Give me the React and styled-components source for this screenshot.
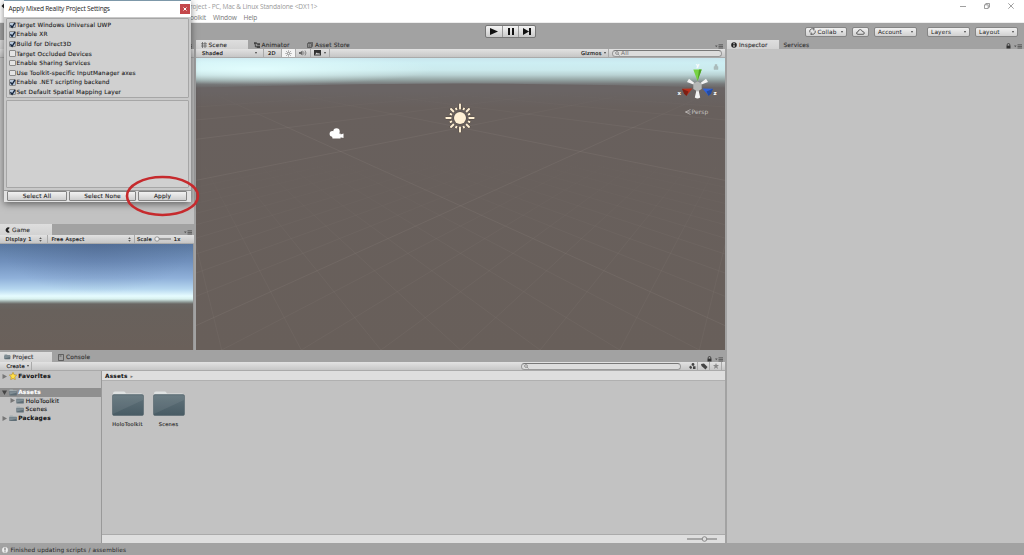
import React from 'react';
import styled, { createGlobalStyle, css } from 'styled-components';

const GlobalStyle = createGlobalStyle`
    * {
        box-sizing: border-box;
    }
    body {
        margin: 0;
        overflow: hidden;
        background: #a2a2a2;
        font-family: "DejaVu Sans", sans-serif;
        font-size: 5.8px;
        line-height: 8px;
        color: #222;
    }
    svg {
        display: block;
        flex: none;
    }
`;

const Editor = styled.div`
    position: relative;
    width: 1024px;
    height: 555px;
    display: flex;
    flex-direction: column;
    background: #a2a2a2;
    overflow: hidden;
    white-space: nowrap;
`;

const Text = styled.span`
    flex: none;
    margin-left: ${(p) => p.$ml || 0}px;
    letter-spacing: ${(p) => p.$ls ?? 0.17}px;
    font-weight: ${(p) => (p.$bold ? 'bold' : 'normal')};
    font-size: ${(p) => p.$size || 5.8}px;
    color: ${(p) => p.$color || 'inherit'};
`;

const Spacer = styled.div`
    flex: 1;
`;

const WindowHeader = styled.header`
    flex: none;
    display: flex;
    justify-content: space-between;
    height: 23px;
    background: #fff;
    border-bottom: 1px solid #eee;
    font-family: "Open Sans", sans-serif;
    color: #999;
`;

const HeaderLines = styled.div`
    padding-left: 168px;
`;

const AppMark = styled.div`
    display: flex;
    align-items: center;
    height: 12px;
    width: 22px;
`;

const TitleLine = styled.div`
    height: 12px;
    line-height: 13px;
    font-size: 6.6px;
    letter-spacing: -0.16px;
`;

const MenuLine = styled.div`
    display: flex;
    gap: 7px;
    height: 10px;
    line-height: 11px;
    font-size: 6.6px;
    letter-spacing: -0.2px;
    color: #777;
`;

const WindowButtons = styled.div`
    display: flex;
    align-items: center;
    gap: 18px;
    height: 11px;
    padding-right: 10px;
`;

const MainToolbar = styled.div`
    flex: none;
    display: flex;
    height: 17px;
    padding: 2px 6px 0 0;
`;

const PlayControls = styled.div`
    display: flex;
    width: 51px;
    height: 13px;
    margin-left: 485px;
    border: 1px solid #777;
    border-radius: 2px;
    background: linear-gradient(#f4f4f4, #c9c9c9);
`;

const PlayButton = styled.div`
    flex: 1;
    display: flex;
    align-items: center;
    justify-content: center;
    & + & {
        border-left: 1px solid #999;
    }
`;

const ToolbarButton = styled.div`
    display: flex;
    align-items: center;
    width: ${(p) => p.$width}px;
    height: 10px;
    margin: 1.5px 0 0 ${(p) => p.$ml || 0}px;
    padding: 0 3px;
    border: 1px solid #858585;
    border-radius: 2px;
    background: linear-gradient(#f0f0f0, #d0d0d0);
`;

const Caret = styled.i`
    flex: none;
    width: 0;
    height: 0;
    margin-left: auto;
    border: 1.5px solid transparent;
    border-top: 2px solid #444;
    border-bottom: 0;
`;

const Body = styled.div`
    flex: 1;
    display: flex;
    min-height: 0;
    gap: 2px;
`;

const Workspace = styled.div`
    width: 725px;
    display: flex;
    flex-direction: column;
`;

const UpperRow = styled.div`
    flex: none;
    display: flex;
    gap: 2px;
    height: 312px;
    padding-bottom: 2px;
`;

const LeftColumn = styled.div`
    width: 194px;
    display: flex;
    flex-direction: column;
`;

const Panel = styled.section`
    display: flex;
    flex-direction: column;
    min-width: 0;
    ${(p) => (p.$height ? css`height: ${p.$height}px; flex: none;` : css`flex: 1;`)}
    min-height: 0;
`;

const TabBar = styled.div`
    flex: none;
    display: flex;
    height: ${(p) => p.$height || 9}px;
    padding-right: 2px;
    color: #333;
`;

const Tab = styled.div`
    display: flex;
    align-items: center;
    width: ${(p) => p.$width}px;
    padding-left: ${(p) => p.$pl || 5}px;
    gap: 2px;
    background: ${(p) => (p.$active ? 'linear-gradient(#dedede, #d2d2d2)' : 'none')};
    font-size: 5.9px;
    letter-spacing: 0.12px;
    -webkit-text-stroke: 0.12px currentColor;
`;

const TabTools = styled.div`
    display: flex;
    align-items: flex-end;
    gap: 3px;
    margin-left: auto;
`;

const PanelToolbar = styled.div`
    flex: none;
    display: flex;
    align-items: center;
    height: 9px;
    background: linear-gradient(#e2e2e2, #c6c6c6);
    border-bottom: 1px solid #aaa;
    font-size: 5.2px;
    letter-spacing: 0.25px;
    color: #111;
    -webkit-text-stroke: 0.15px currentColor;
`;

const ToolItem = styled.div`
    display: flex;
    align-items: center;
    width: ${(p) => p.$width}px;
    height: 100%;
    padding: 0 ${(p) => p.$px ?? 3}px;
    border-right: 1px solid #aaa;
    background: ${(p) => (p.$on ? '#f4f4f4' : 'none')};
`;

const SearchField = styled.div`
    display: flex;
    align-items: center;
    width: ${(p) => p.$width}px;
    height: 7px;
    margin: 0 ${(p) => p.$mr}px 0 ${(p) => p.$ml || 0}px;
    padding-left: 2px;
    border: 1px solid #999;
    border-top-color: #777;
    border-radius: 4px;
    background: #dcdcdc;
    color: #888;
    font-size: 5.8px;
`;

const GrayFill = styled.div`
    flex: 1;
    background: #c2c2c2;
`;

const SceneView = styled.div`
    flex: 1;
    background:
        radial-gradient(ellipse 180px 16px at 60px 11px, rgba(228, 255, 255, 0.9), transparent),
        linear-gradient(
            #c9e6ee 0,
            #cdeef3 5px,
            #cbeaed 12px,
            #b9d2d3 17px,
            #93a3a2 22px,
            #77797a 26px,
            #6a6565 30px,
            #68605d 50px,
            #685f5a 100%
        );
`;

const SceneDrawing = styled.svg`
    width: 529px;
    height: 292px;
`;

const GameView = styled.div`
    flex: 1;
    border-right: 1px solid #999;
    background:
        radial-gradient(ellipse 50% 50px at 50% 0, rgba(60, 80, 120, 0.25), transparent),
        linear-gradient(
            #59779f 0,
            #7191bd 18px,
            #8fb0d9 34px,
            #b5d6ef 45px,
            #e6fcff 52px,
            #d9f1ef 55px,
            #8f9b98 58px,
            #696663 60px,
            #68615c 66px,
            #6a605a 100%
        );
`;

const ProjectBody = styled.div`
    flex: 1;
    display: flex;
    background: #c2c2c2;
`;

const Tree = styled.div`
    width: 102px;
    border-right: 1px solid #999;
    -webkit-text-stroke: 0.1px currentColor;
`;

const TreeRow = styled.div`
    display: flex;
    align-items: center;
    gap: 1.6px;
    height: ${(p) => p.$height || 8.6}px;
    margin-bottom: ${(p) => p.$gap || 0}px;
    padding-left: ${(p) => p.$indent}px;
    background: ${(p) => (p.$selected ? '#8f8f8f' : 'none')};
    color: ${(p) => (p.$selected ? '#fff' : '#111')};
`;

const Assets = styled.div`
    flex: 1;
    display: flex;
    flex-direction: column;
`;

const Breadcrumb = styled.div`
    height: 10px;
    padding: 1px 3px 0;
    background: #dedede;
    border-bottom: 1px solid #b0b0b0;
    color: #111;
`;

const FolderGrid = styled.div`
    flex: 1;
    display: flex;
    gap: 8px;
    padding: 10px 9px;
    -webkit-text-stroke: 0.12px currentColor;
`;

const FolderCell = styled.div`
    display: flex;
    flex-direction: column;
    align-items: center;
    width: 33px;
    gap: 3px;
`;

const AssetsFooter = styled.div`
    display: flex;
    justify-content: flex-end;
    align-items: center;
    height: 9px;
    padding-right: 8px;
    background: #dedede;
    border-top: 1px solid #aaa;
`;

const StatusBar = styled.footer`
    flex: none;
    display: flex;
    align-items: center;
    gap: 1.5px;
    height: 12px;
    padding: 2px 0 0 1px;
`;

const Dialog = styled.div`
    position: absolute;
    left: 4px;
    top: 0;
    width: 187px;
    height: 202px;
    display: flex;
    flex-direction: column;
    border-top: 1px solid #7d98a9;
    background: #c9c9c9;
    box-shadow: 0 2px 7px rgba(0, 0, 0, 0.5);
`;

const DialogTitle = styled.div`
    flex: none;
    display: flex;
    align-items: center;
    height: 16px;
    padding-left: 4.5px;
    background: #fff;
    font-family: "Open Sans", sans-serif;
    color: #222;
`;

const CloseButton = styled.div`
    display: flex;
    align-items: center;
    justify-content: center;
    width: 10px;
    height: 10px;
    margin: 0 1px 0 auto;
    background: #c4474a;
`;

const Group = styled.div`
    flex: none;
    height: ${(p) => p.$height}px;
    margin: ${(p) => p.$mt}px 2px 0;
    padding: 1px 2px;
    border: 1px solid #a6a6a6;
    border-radius: 1px;
    background: #d0d0d0;
`;

const CheckRow = styled.div`
    display: flex;
    align-items: center;
    height: 9.6px;
    gap: 1px;
    -webkit-text-stroke: 0.1px currentColor;
`;

const CheckBox = styled.div`
    width: 6.5px;
    height: 6.5px;
    border: 1px solid #8a8a8a;
    border-radius: 1px;
    background: ${(p) => (p.$on ? '#b9c9dc' : '#e4e4e4')};
`;

const DialogFooter = styled.div`
    display: flex;
    align-items: center;
    gap: 2px;
    height: 13px;
    margin-top: 2px;
    padding: 0 3px;
    background: #e2e2e2;
    border-top: 1px solid #999;
`;

const DialogButton = styled.div`
    width: ${(p) => p.$width}px;
    height: 10px;
    line-height: 8.5px;
    border: 1px solid #848484;
    border-radius: 1px;
    background: linear-gradient(#f2f2f2, #cecece);
    text-align: center;
    letter-spacing: 0.15px;
    -webkit-text-stroke: 0.1px currentColor;
`;

const Highlight = styled.svg`
    position: absolute;
    left: 122px;
    top: 173px;
`;

const CheckSvg = styled.svg`
    overflow: visible;
    margin: -1px;
`;

const CheckMark = () => (
    <CheckSvg width="7" height="7" viewBox="0 0 7 7">
        <path d="M1.4 3.3l1.7 2L6 .8" fill="none" stroke="#16253c" strokeWidth="1.4" />
    </CheckSvg>
);

const Folder = ({ size = 8 }) => (
    <svg width={size} height={size * 0.85} viewBox="0 0 20 17">
        <path d="M1 6V3q0-2 2-2h6l2 2h7q1.500 0 1.500 3z" fill="#a3adb0" />
        <rect x="1" y="5" width="18.500" height="11.500" rx="1.500" fill="#5f6e76" />
        <path d="M1.500 5.500h17.500v4L1.500 14z" fill="#7f8d94" />
    </svg>
);

const BigFolder = () => (
    <svg width="32" height="26" viewBox="0 0 32 26">
        <defs>
            <linearGradient id="folder" x2="0" y2="1">
                <stop offset="0" stopColor="#61737b" />
                <stop offset="1" stopColor="#485b64" />
            </linearGradient>
        </defs>
        <path d="M1 6V2.500Q1 .5 3 .5h9q1 0 2 2h15q2 0 2 2V6z" fill="#dfe2e2" />
        <rect x=".5" y="3.500" width="31" height="21" rx="1.500" fill="url(#folder)" stroke="#4b5c64" strokeWidth=".5" />
        <path d="M1 4.500h30V9L1 23z" fill="#fff" opacity=".07" />
    </svg>
);

const Arrow = ({ open }) => (
    <svg width="5" height="5" viewBox="0 0 5 5">
        <path d={open ? 'M0 .5h5L2.500 5z' : 'M.5 0v5L5 2.500z'} fill={open ? '#444' : '#777'} />
    </svg>
);

const UpDownSvg = styled.svg`
    margin-left: auto;
`;

const UpDown = () => (
    <UpDownSvg width="3" height="5" viewBox="0 0 3 5">
        <path d="M.2 2L1.500.3 2.800 2zM.2 3l1.300 1.700L2.800 3z" fill="#555" />
    </UpDownSvg>
);

const PanelMenu = () => (
    <svg width="8" height="5" viewBox="0 0 8 5">
        <path d="M0 1.500h2.600L1.300 3.200z" fill="#555" />
        <path d="M3.500.8H8M3.500 2.400H8M3.500 4H8" stroke="#555" strokeWidth=".9" />
    </svg>
);

const Lock = () => (
    <svg width="5" height="6" viewBox="0 0 5 6">
        <path d="M1.200 3V1.800a1.300 1.300 0 012.600 0V3" fill="none" stroke="#333" strokeWidth=".8" />
        <rect x=".5" y="2.700" width="4" height="2.800" fill="#333" />
    </svg>
);

const Magnifier = () => (
    <svg width="6" height="5" viewBox="0 0 6 5">
        <circle cx="2" cy="2" r="1.400" fill="none" stroke="#777" strokeWidth=".7" />
        <path d="M3 3l1.500 1.600" stroke="#777" strokeWidth=".7" />
    </svg>
);

const SunIcon = () => (
    <svg width="7" height="7" viewBox="-4 -4 8 8">
        <circle r="1.400" fill="none" stroke="#555" strokeWidth=".7" />
        {[0, 45, 90, 135, 180, 225, 270, 315].map((a) => (
            <path key={a} d="M0-2.300V-3.500" stroke="#555" strokeWidth=".7" transform={`rotate(${a})`} />
        ))}
    </svg>
);

// ground grid: two mirrored families of lines, each going to its own vanishing point
const VANISH = { x: -44, y: 8 };
const CENTER = 264.5;
const gridLine = (k) => {
    const dx = CENTER + 79.6 * k - VANISH.x;
    const dy = 292 - VANISH.y;
    return `M${VANISH.x} ${VANISH.y}l${dx * 1.2} ${dy * 1.2}`;
};
const fineLines = [-3, -2, -1, 0, 1, 2, 3, 5, 6, 7, 8, 9, 10, 11, 12, 13];
const mainLines = [4, 14, 24, 34, 46, 64];

const GridFamily = ({ mirror }) => (
    <g transform={mirror ? `translate(${CENTER * 2} 0) scale(-1 1)` : undefined} fill="none" stroke="#958c86" strokeWidth=".8">
        <g mask="url(#nearFade)" opacity=".15">
            {fineLines.map((k) => <path key={k} d={gridLine(k)} />)}
        </g>
        <g mask="url(#farFade)" opacity=".23">
            {mainLines.map((k) => <path key={k} d={gridLine(k)} />)}
        </g>
    </g>
);

const rayLength = (i) => (i % 4 === 0 ? 6 : i % 2 === 0 ? 5 : 2.6);

const SceneArt = () => (
    <SceneDrawing viewBox="0 0 529 292">
        <defs>
            <linearGradient id="near" gradientUnits="userSpaceOnUse" x1="0" y1="90" x2="0" y2="190">
                <stop offset="0" stopColor="#000" />
                <stop offset="1" stopColor="#fff" />
            </linearGradient>
            <linearGradient id="far" gradientUnits="userSpaceOnUse" x1="0" y1="32" x2="0" y2="75">
                <stop offset="0" stopColor="#000" />
                <stop offset="1" stopColor="#fff" />
            </linearGradient>
            <mask id="nearFade" maskUnits="userSpaceOnUse" x="0" y="0" width="529" height="292">
                <rect width="529" height="292" fill="url(#near)" />
            </mask>
            <mask id="farFade" maskUnits="userSpaceOnUse" x="0" y="0" width="529" height="292">
                <rect width="529" height="292" fill="url(#far)" />
            </mask>
        </defs>
        <path d="M0 30Q264 21 529 30V34H0z" fill="#6a6464" />
        <GridFamily />
        <GridFamily mirror />
        <g transform="translate(264 60)" stroke="#4c4238" fill="#fff0d4" strokeWidth=".8" paintOrder="stroke">
            <circle r="6" />
            {Array.from({ length: 16 }, (_, i) => (
                <rect
                    key={i} x="-.95" y={-8.5 - rayLength(i)} width="1.900" height={rayLength(i)} rx=".4"
                    transform={`rotate(${i * 22.5})`}
                />
            ))}
        </g>
        <g transform="translate(133 70)" fill="#fff">
            <circle cx="3.500" cy="5.800" r="2.900" />
            <circle cx="7.500" cy="3.500" r="3.200" />
            <path d="M2.500 5.500h9V10.500h-8zM10 7l4.500-1.500v4.500l-4.500-1z" />
        </g>
        <g transform="translate(501.500 28)">
            <path d="M-4-1.500L-10.500-4-8.500-7.200-3-3zM4-1.500L10.500-4 8.500-7.200 3-3zM-1 4h2l1.700 7.500q-2.700 2-5.400 0z" fill="#f2f2f2" />
            <path d="M-4.200-2.500L0-4.500l4.200 2V3L0 5.500-4.200 3z" fill="#b5b7b6" />
            <path d="M-4.200-16.500h8.400L0-5z" fill="#77d344" />
            <path d="M1.500-16.500h2.700L0-5z" fill="#4fa026" />
            <path d="M-5 2.500l-10.500.3 4.500 7z" fill="#bd2f1a" />
            <path d="M-15.500 2.800l2 5L-11 10l2-4.500z" fill="#7d2014" />
            <path d="M5 2.500l10.500.3-4.500 7z" fill="#2f62dc" />
            <path d="M15.500 2.800l-2 5L11 10 9 5.500z" fill="#244ba0" />
        </g>
        <g fill="#fff" fontSize="5.400" fontWeight="bold">
            <text x="499.700" y="8.500">y</text>
            <text x="481.500" y="37">x</text>
            <text x="517.500" y="37">z</text>
        </g>
        <path d="M518 8.500h4v3h-4zM519 8.500V6.500h2v2" fill="#aabbbb" stroke="#aabbbb" strokeWidth=".5" />
        <path d="M494.500 51.500l-5 2.500 5 2.500M489.500 54h5" fill="none" stroke="#c5c2c0" strokeWidth=".7" />
        <text x="495.500" y="56" fontSize="6" letterSpacing=".1" fill="#c5c2c0">Persp</text>
    </SceneDrawing>
);

const options = [
    ['Target Windows Universal UWP', true],
    ['Enable XR', true],
    ['Build for Direct3D', true],
    ['Target Occluded Devices', false],
    ['Enable Sharing Services', false],
    ['Use Toolkit-specific InputManager axes', false],
    ['Enable .NET scripting backend', true],
    ['Set Default Spatial Mapping Layer', true],
];

const SettingsDialog = () => (
    <Dialog>
        <DialogTitle>
            <Text $size={6.6} $ls={-0.22}>Apply Mixed Reality Project Settings</Text>
            <CloseButton>
                <svg width="4" height="4" viewBox="0 0 4 4"><path d="M.5.5l3 3M3.500.5l-3 3" stroke="#fff" /></svg>
            </CloseButton>
        </DialogTitle>
        <Group $height={80} $mt={1}>
            {options.map(([label, on]) => (
                <CheckRow key={label}>
                    <CheckBox $on={on}>{on && <CheckMark />}</CheckBox>
                    <Text>{label}</Text>
                </CheckRow>
            ))}
        </Group>
        <Group $height={88} $mt={1.5} />
        <DialogFooter>
            <DialogButton $width={60}>Select All</DialogButton>
            <DialogButton $width={67}>Select None</DialogButton>
            <DialogButton $width={49}>Apply</DialogButton>
        </DialogFooter>
    </Dialog>
);

const App = () => (
    <>
        <GlobalStyle />
        <Editor>
            <WindowHeader>
                <AppMark>
                    <svg width="6" height="8" viewBox="0 0 6 8"><path d="M1.500 4L5 .5v7z" fill="#222" /></svg>
                </AppMark>
                <HeaderLines>
                    <TitleLine>roject - PC, Mac &amp; Linux Standalone &lt;DX11&gt;</TitleLine>
                    <MenuLine><span>oolkit</span><span>Window</span><span>Help</span></MenuLine>
                </HeaderLines>
                <Spacer />
                <WindowButtons>
                    <svg width="6" height="6" viewBox="0 0 6 6"><path d="M0 3.500h6" stroke="#888" strokeWidth=".8" /></svg>
                    <svg width="6" height="6" viewBox="0 0 6 6"><path d="M.5 1.800h3.700v3.700H.5zM1.800 1.800V.5h3.700v3.700H4.200" fill="none" stroke="#777" strokeWidth=".7" /></svg>
                    <svg width="6" height="6" viewBox="0 0 6 6"><path d="M.3.3l5.400 5.400M5.700.3L.3 5.700" stroke="#777" strokeWidth=".7" /></svg>
                </WindowButtons>
            </WindowHeader>

            <MainToolbar>
                <PlayControls>
                    <PlayButton><svg width="8" height="7" viewBox="0 0 8 7"><path d="M0 0v7l8-3.500z" fill="#111" /></svg></PlayButton>
                    <PlayButton><svg width="6" height="7" viewBox="0 0 6 7"><path d="M0 0h2v7H0zM4 0h2v7H4z" fill="#111" /></svg></PlayButton>
                    <PlayButton><svg width="9" height="7" viewBox="0 0 9 7"><path d="M0 0v7l6-3.500zM6 0h2v7H6z" fill="#111" /></svg></PlayButton>
                </PlayControls>
                <Spacer />
                <ToolbarButton $width={42}>
                    <svg width="7" height="7" viewBox="0 0 7 7"><path d="M1 4.500A2.600 2.600 0 014.500 1M6 2.500A2.600 2.600 0 012.500 6M4 0l1.500 1L4 2.300M3 4.700L1.500 6 3 7" fill="none" stroke="#444" strokeWidth=".8" /></svg>
                    <Text $ml={1.5}>Collab</Text><Caret />
                </ToolbarButton>
                <ToolbarButton $width={17} $ml={5}>
                    <svg width="9" height="6" viewBox="0 0 9 6"><path d="M2 5.300Q.4 5.200.5 4T2 2.800Q2.200.7 4.300.6 6 .8 6.300 2.500q2 .1 2 1.500T7 5.300z" fill="none" stroke="#444" strokeWidth=".8" /></svg>
                </ToolbarButton>
                <ToolbarButton $width={43} $ml={5}><Text $ls={0.05}>Account</Text><Caret /></ToolbarButton>
                <ToolbarButton $width={43} $ml={10}><Text>Layers</Text><Caret /></ToolbarButton>
                <ToolbarButton $width={43} $ml={5}><Text>Layout</Text><Caret /></ToolbarButton>
            </MainToolbar>

            <Body>
                <Workspace>
                    <UpperRow>
                        <LeftColumn>
                            <Panel $height={184}>
                                <TabBar><Tab $active $width={50} /><TabTools><PanelMenu /></TabTools></TabBar>
                                <PanelToolbar />
                                <GrayFill />
                            </Panel>
                            <Panel>
                                <TabBar $height={11}>
                                    <Tab $active $width={52}>
                                        <svg width="5" height="6" viewBox="0 0 5 6"><path d="M4.800.7A2.700 2.700 0 104.800 5.300L2.800 3z" fill="#222" /></svg>
                                        Game
                                    </Tab>
                                    <TabTools><PanelMenu /></TabTools>
                                </TabBar>
                                <PanelToolbar>
                                    <ToolItem $width={48} $px={5.5}>Display 1<UpDown /></ToolItem>
                                    <ToolItem $width={87} $px={3.5}>Free Aspect<UpDown /></ToolItem>
                                    <Text $ml={2} $size={5.2}>Scale</Text>
                                    <Text $ml={2} />
                                    <svg width="19" height="6" viewBox="0 0 19 6">
                                        <path d="M3 3h14" stroke="#666" /><circle cx="3" cy="3" r="2.200" fill="#eee" stroke="#777" strokeWidth=".7" />
                                    </svg>
                                    <Text $ml={1} $size={5.2}>1x</Text>
                                </PanelToolbar>
                                <GameView />
                            </Panel>
                        </LeftColumn>
                        <Panel>
                            <TabBar>
                                <Tab $active $width={52} $pl={4.5}>
                                    <svg width="6" height="6" viewBox="0 0 6 6"><path d="M1.500 0v6M4 0v6M0 1.800h6M0 4h6" stroke="#555" strokeWidth=".7" /></svg>
                                    Scene
                                </Tab>
                                <Tab $width={54} $pl={5.5}>
                                    <svg width="6" height="6" viewBox="0 0 6 6"><path d="M0 .5h2.500V2H0zM3.500 1.500H6V3H3.500zM3 4h3v2H3zM1.200 2v3H3M2 1.500h2" stroke="#444" strokeWidth=".5" fill="#444" /></svg>
                                    Animator
                                </Tab>
                                <Tab $width={60}>
                                    <svg width="6" height="6" viewBox="0 0 6 6"><path d="M.5 1.500h4v4h-4zM1.500 1V.4h4v4H5M1.500 3h2M1.500 4.300h2" stroke="#444" strokeWidth=".7" fill="none" /></svg>
                                    Asset Store
                                </Tab>
                                <TabTools><PanelMenu /></TabTools>
                            </TabBar>
                            <PanelToolbar>
                                <ToolItem $width={68} $px={6}>Shaded<Caret /></ToolItem>
                                <ToolItem $width={18} $px={4}>2D</ToolItem>
                                <ToolItem $width={14} $on><SunIcon /></ToolItem>
                                <ToolItem $width={15}>
                                    <svg width="8" height="6" viewBox="0 0 8 6"><path d="M0 2h1.500L3.500.5v5L1.500 4H0z" fill="#666" /><path d="M4.500 1.500q1 1.500 0 3M6 .5q2 2.500 0 5" fill="none" stroke="#666" strokeWidth=".7" /></svg>
                                </ToolItem>
                                <ToolItem $width={19}>
                                    <svg width="7" height="6" viewBox="0 0 7 6"><rect width="7" height="5.500" fill="#333" /><path d="M1 4.500L2.800 2.500 4 3.700l1-.8 1.200 1.600z" fill="#ddd" /></svg>
                                    <Caret />
                                </ToolItem>
                                <Spacer />
                                <ToolItem $width={30} $px={2}>Gizmos<Caret /></ToolItem>
                                <SearchField $width={110} $ml={3} $mr={3}><Magnifier />All</SearchField>
                            </PanelToolbar>
                            <SceneView><SceneArt /></SceneView>
                        </Panel>
                    </UpperRow>

                    <Panel>
                        <TabBar $height={10}>
                            <Tab $active $width={52} $pl={4}>
                                <Folder size={6.5} />
                                Project
                            </Tab>
                            <Tab $width={60} $pl={6}>
                                <svg width="6" height="7" viewBox="0 0 6 7"><path d="M.5.5h5v6h-5zM1.500 2h2" fill="none" stroke="#444" strokeWidth=".7" /></svg>
                                Console
                            </Tab>
                            <TabTools><Lock /><PanelMenu /></TabTools>
                        </TabBar>
                        <PanelToolbar>
                            <ToolItem $width={32} $px={2.5}><Text $ml={4} $size={5.2}>Create</Text><Caret /></ToolItem>
                            <Spacer />
                            <SearchField $width={160} $mr={5}><Magnifier /></SearchField>
                            <ToolItem $width={12}><svg width="7" height="6" viewBox="0 0 7 6"><circle cx="4" cy="1.500" r="1.400" fill="#444" /><path d="M0 4l2-1.500L3.200 5 1.500 6zM4 3.200h2.500V6H4z" fill="#444" /></svg></ToolItem>
                            <ToolItem $width={12}><svg width="7" height="7" viewBox="0 0 7 7"><path d="M0 1l3-.5L6.500 4 4.500 6.500.500 3z" fill="#444" /></svg></ToolItem>
                            <ToolItem $width={12}><svg width="6" height="6" viewBox="0 0 6 6"><path d="M3 0l.8 2H6L4.300 3.500 5 6 3 4.600 1 6l.7-2.500L0 2h2.200z" fill="#888" /></svg></ToolItem>
                            <Text $ml={3} />
                        </PanelToolbar>
                        <ProjectBody>
                            <Tree>
                                <TreeRow $indent={2} $height={10} $gap={7}>
                                    <Arrow />
                                    <svg width="8" height="8" viewBox="0 0 8 8"><path d="M4 .3l1.100 2.400 2.600.4-1.900 1.800.5 2.700L4 6.400 1.700 7.600l.5-2.700L.3 3.100l2.600-.4z" fill="#ffe04a" stroke="#b78a1c" strokeWidth=".6" /></svg>
                                    <Text $bold $ls={0.27}>Favorites</Text>
                                </TreeRow>
                                <TreeRow $indent={2} $selected><Arrow open /><Folder /><Text $bold>Assets</Text></TreeRow>
                                <TreeRow $indent={9.5}><Arrow /><Folder /><Text>HoloToolkit</Text></TreeRow>
                                <TreeRow $indent={16}><Folder /><Text>Scenes</Text></TreeRow>
                                <TreeRow $indent={2}><Arrow /><Folder /><Text $bold $ls={0.24}>Packages</Text></TreeRow>
                            </Tree>
                            <Assets>
                                <Breadcrumb><Text $bold>Assets</Text> <Text $ml={1} $size={5} $color="#777">▸</Text></Breadcrumb>
                                <FolderGrid>
                                    <FolderCell><BigFolder /><Text $size={5.1} $ls={0.25}>HoloToolkit</Text></FolderCell>
                                    <FolderCell><BigFolder /><Text $size={5.1} $ls={0.25}>Scenes</Text></FolderCell>
                                </FolderGrid>
                                <AssetsFooter>
                                    <svg width="30" height="6" viewBox="0 0 30 6"><path d="M0 3h30" stroke="#888" strokeWidth="1.300" /><circle cx="17.500" cy="3" r="2.300" fill="#ddd" stroke="#777" strokeWidth=".8" /></svg>
                                </AssetsFooter>
                            </Assets>
                        </ProjectBody>
                    </Panel>
                </Workspace>

                <Panel>
                    <TabBar>
                        <Tab $active $width={52} $pl={4}>
                            <svg width="6" height="6" viewBox="0 0 6 6"><circle cx="3" cy="3" r="2.800" fill="#222" /><path d="M3 1v1M3 2.600V5" stroke="#eee" /></svg>
                            Inspector
                        </Tab>
                        <Tab $width={50} $pl={4.5}>Services</Tab>
                        <TabTools><Lock /><PanelMenu /></TabTools>
                    </TabBar>
                    <GrayFill />
                </Panel>
            </Body>

            <StatusBar>
                <svg width="8" height="8" viewBox="0 0 8 8"><circle cx="4" cy="4" r="3.500" fill="#eee" stroke="#777" strokeWidth=".5" /><path d="M4 1.700v2.800M4 5.300v1" stroke="#666" /></svg>
                <Text $ls={0.14}>Finished updating scripts / assemblies</Text>
            </StatusBar>

            <SettingsDialog />
            <Highlight width="78" height="46" viewBox="0 0 78 46">
                <ellipse cx="40.500" cy="23" rx="35.500" ry="19" fill="none" stroke="#c62a2d" strokeWidth="2.600" />
            </Highlight>
        </Editor>
    </>
);

export default App;
